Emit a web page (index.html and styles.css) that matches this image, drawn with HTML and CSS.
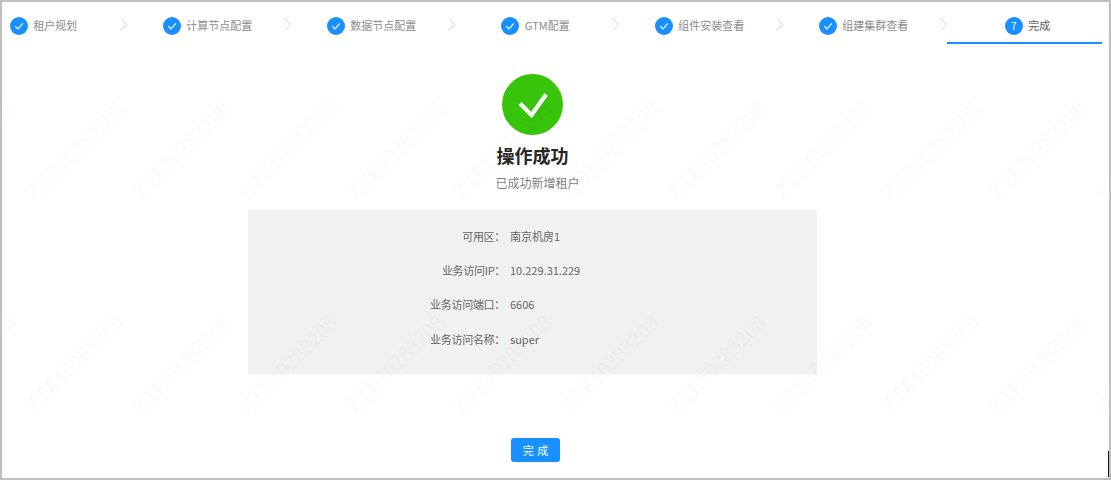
FILE: index.html
```html
<!DOCTYPE html>
<html lang="zh-CN">
<head>
<meta charset="utf-8">
<title>完成</title>
<link rel="stylesheet" href="styles.css">
</head>
<body>
<div class="frame">
  <nav class="steps">
    <div class="step step-first"><span class="dot"><svg viewBox="0 0 18 18" class="tick"><path d="M5.2 9.2l2.7 2.7 5-5.6"/></svg></span><span class="label">租户规划</span></div>
    <div class="sep"><svg viewBox="0 0 8 13" class="chev"><path d="M.5.5l6.5 6-6.5 6"/></svg></div>
    <div class="step"><span class="dot"><svg viewBox="0 0 18 18" class="tick"><path d="M5.2 9.2l2.7 2.7 5-5.6"/></svg></span><span class="label">计算节点配置</span></div>
    <div class="sep"><svg viewBox="0 0 8 13" class="chev"><path d="M.5.5l6.5 6-6.5 6"/></svg></div>
    <div class="step"><span class="dot"><svg viewBox="0 0 18 18" class="tick"><path d="M5.2 9.2l2.7 2.7 5-5.6"/></svg></span><span class="label">数据节点配置</span></div>
    <div class="sep"><svg viewBox="0 0 8 13" class="chev"><path d="M.5.5l6.5 6-6.5 6"/></svg></div>
    <div class="step"><span class="dot"><svg viewBox="0 0 18 18" class="tick"><path d="M5.2 9.2l2.7 2.7 5-5.6"/></svg></span><span class="label">GTM配置</span></div>
    <div class="sep"><svg viewBox="0 0 8 13" class="chev"><path d="M.5.5l6.5 6-6.5 6"/></svg></div>
    <div class="step"><span class="dot"><svg viewBox="0 0 18 18" class="tick"><path d="M5.2 9.2l2.7 2.7 5-5.6"/></svg></span><span class="label">组件安装查看</span></div>
    <div class="sep"><svg viewBox="0 0 8 13" class="chev"><path d="M.5.5l6.5 6-6.5 6"/></svg></div>
    <div class="step"><span class="dot"><svg viewBox="0 0 18 18" class="tick"><path d="M5.2 9.2l2.7 2.7 5-5.6"/></svg></span><span class="label">组建集群查看</span></div>
    <div class="sep"><svg viewBox="0 0 8 13" class="chev"><path d="M.5.5l6.5 6-6.5 6"/></svg></div>
    <div class="step step-active"><span class="dot">7</span><span class="label">完成</span></div>
  </nav>

  <main class="result">
    <svg class="result-icon" viewBox="0 0 61 61"><circle cx="30.5" cy="30.5" r="30.5"/><path d="M18 29.5l11.5 11.5 14.5-20.5"/></svg>
    <h1 class="result-title">操作成功</h1>
    <p class="result-sub">已成功新增租户</p>
    <dl class="panel">
      <div class="row"><dt>可用区：</dt><dd>南京机房1</dd></div>
      <div class="row"><dt>业务访问IP：</dt><dd>10.229.31.229</dd></div>
      <div class="row"><dt>业务访问端口：</dt><dd>6606</dd></div>
      <div class="row"><dt>业务访问名称：</dt><dd>super</dd></div>
    </dl>
    <button class="btn" type="button">完 成</button>
  </main>

  <svg class="watermark" width="100%" height="100%">
    <defs>
      <pattern id="wm" width="107" height="214" patternUnits="userSpaceOnUse" patternTransform="translate(20.5 43)">
        <text class="wm-text" transform="translate(53.5 107) rotate(-45)" text-anchor="middle" dominant-baseline="middle">ZTE10283208</text>
      </pattern>
    </defs>
    <rect width="100%" height="100%" fill="url(#wm)"/>
  </svg>
  <span class="edge-mark"></span>
</div>
</body>
</html>
```
FILE: styles.css
```css
* { box-sizing: border-box; }
html, body { margin: 0; padding: 0; }
body {
  width: 1111px;
  height: 480px;
  overflow: hidden;
  background: #fff;
  font-family: "Noto Sans CJK SC", "Noto Sans", sans-serif;
  font-size: 11px;
  color: #595959;
}
.frame {
  position: relative;
  width: 1111px;
  height: 480px;
  border: 2px solid #bfbfbf;
  overflow: hidden;
}

/* steps */
.steps {
  display: flex;
  height: 42px;
}
.step {
  flex: 0 0 155px;
  height: 42px;
  padding: 15px 0 0 6px;
  display: flex;
  justify-content: center;
  align-items: flex-start;
  gap: 5.5px;
  color: #8c8c8c;
  line-height: 17px;
}
.step-first {
  flex-basis: 116px;
  padding-left: 8px;
  justify-content: flex-start;
}
.step-first .label { letter-spacing: -0.2px; }
.step-active {
  color: #595959;
  border-bottom: 2px solid #1890ff;
}
.dot {
  flex: none;
  width: 18px;
  height: 18px;
  border-radius: 50%;
  background: #1890ff;
  color: #fff;
  font-size: 10px;
  line-height: 18px;
  text-align: center;
}
.tick {
  display: block;
  width: 18px;
  height: 18px;
  fill: none;
  stroke: #fff;
  stroke-width: 1.1;
}
.sep {
  flex: 0 0 9px;
  min-width: 0;
  width: 9px;
  padding: 16px 0 0 2px;
  overflow: visible;
}
.chev {
  display: block;
  width: 8px;
  height: 13px;
  fill: none;
  stroke: #d4d4d4;
  stroke-width: 1;
}

/* result */
.result {
  display: flex;
  flex-direction: column;
  align-items: center;
  padding-top: 30px;
  padding-right: 46px;
}
.result-icon {
  display: block;
  width: 61px;
  height: 61px;
}
.result-icon circle { fill: #37c40b; }
.result-icon path {
  fill: none;
  stroke: #fff;
  stroke-width: 4.2;
}
.result-title {
  margin: 6px 0 0;
  font-size: 18px;
  line-height: 28px;
  font-weight: 700;
  color: #262626;
}
.result-sub {
  margin: 5px 0 1px;
  font-size: 12px;
  line-height: 18px;
  color: #7f7f7f;
  width: 74px;
  white-space: nowrap;
}
.panel {
  margin: 17px 0 0;
  width: 569px;
  height: 164px;
  background: #f1f1f1;
  padding: 8.5px 0;
  display: flex;
  flex-direction: column;
}
.row {
  flex: none;
  height: 34.3px;
  display: flex;
  align-items: center;
  line-height: 16px;
}
.row dt {
  width: 257px;
  text-align: right;
  letter-spacing: -0.3px;
  color: #666;
}
.row dd {
  margin: 0 0 0 5px;
  font-size: 11px;
  color: #666;
}
.btn {
  margin: 64px 0 0 6px;
  width: 49px;
  height: 24px;
  border: 0;
  border-radius: 3px;
  background: #1890ff;
  color: #fff;
  font-family: inherit;
  font-size: 11px;
  word-spacing: 1px;
  line-height: 24px;
  padding: 0;
}

/* overlays */
.watermark {
  position: absolute;
  left: 0;
  top: 0;
  pointer-events: none;
}
.wm-text {
  font-family: "Liberation Serif", serif;
  font-size: 22px;
  fill: rgba(0, 0, 0, 0.022);
}
.edge-mark {
  position: absolute;
  right: 0;
  bottom: 1px;
  width: 1px;
  height: 26px;
  background: #111;
}
```
